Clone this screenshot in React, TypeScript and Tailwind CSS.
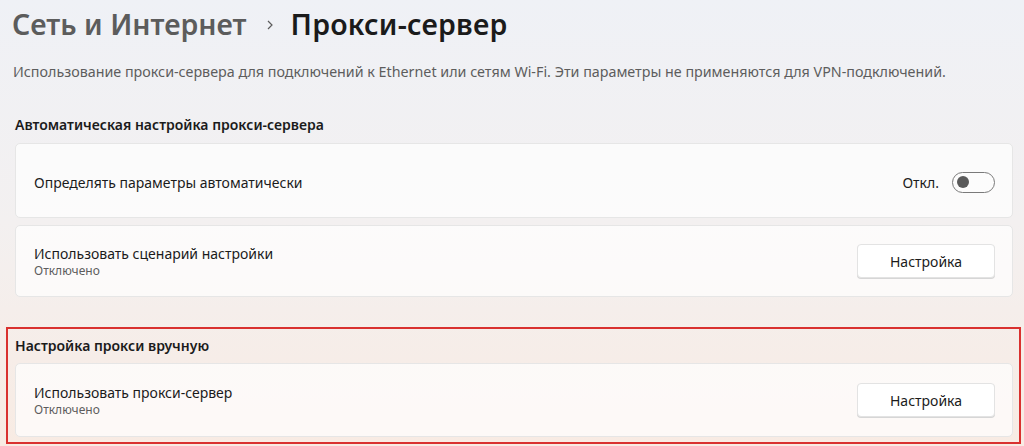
export default function App() {
  return (
    <div
      className="w-[1024px] h-[446px] overflow-hidden bg-gradient-to-b from-[#eff1f6] via-[#f3f0f0] to-[#f8ebe3] text-[#1b1b1b]"
      style={{ fontFamily: '"Noto Sans", "Open Sans", sans-serif' }}
    >
      {/* Breadcrumb title */}
      <div className="flex items-center h-[46px] pl-[12px] pt-[2px]">
        <span className="text-[28.5px] font-semibold text-[#5c5c5c]">Сеть и Интернет</span>
        <svg className="ml-[17px] mr-[15px] mt-[2px]" width="12" height="12" viewBox="0 0 12 12">
          <path d="M4 2 L8 6 L4 10" fill="none" stroke="#5c5c5c" strokeWidth="1.2" />
        </svg>
        <span className="text-[28.5px] font-semibold text-[#1b1b1b] tracking-[0.2px]">Прокси-сервер</span>
      </div>

      <p className="pl-[13px] mt-[15px] text-[14.3px] text-[#5d5d5d]">
        Использование прокси-сервера для подключений к Ethernet или сетям Wi-Fi. Эти параметры не применяются для VPN-подключений.
      </p>

      <h2 className="pl-[15px] mt-[33px] text-[14px] font-semibold leading-[20px]">
        Автоматическая настройка прокси-сервера
      </h2>

      <div className="ml-[15px] mr-[11px] mt-[8px] flex flex-col gap-[7px]">
        <div className="h-[75px] flex items-center justify-between pl-[18px] pr-[17px] pt-[3px] rounded-[5px] border border-[#e6e6e6] bg-white/70">
          <span className="text-[14px]">Определять параметры автоматически</span>
          <div className="flex items-center gap-[13px]">
            <span className="text-[14px]">Откл.</span>
            <div className="w-[43px] h-[21px] rounded-full border border-[#7a7a7a] bg-white/40 flex items-center pl-[4px]">
              <div className="w-[12px] h-[12px] rounded-full bg-[#5a5a5a]" />
            </div>
          </div>
        </div>

        <div className="h-[72px] flex items-center justify-between pl-[18px] pr-[17px] rounded-[5px] border border-[#e6e6e6] bg-white/70">
          <div className="flex flex-col">
            <span className="text-[14px] leading-[19px]">Использовать сценарий настройки</span>
            <span className="text-[12px] leading-[16px] text-[#5d5d5d]">Отключено</span>
          </div>
          <button className="w-[138px] h-[34px] rounded-[4px] border border-[#e3e3e3] bg-white text-[14px] shadow-[0_1px_0_#d6d6d6]">
            Настройка
          </button>
        </div>
      </div>

      <div className="ml-[6px] mr-[3px] mt-[30px] h-[117px] border-2 border-[#d9312f] pl-[7px] pr-[6px] pt-[7px]">
        <h2 className="text-[14px] font-semibold leading-[20px]">Настройка прокси вручную</h2>
        <div className="mt-[7px] h-[74px] flex items-center justify-between pl-[18px] pr-[17px] rounded-[5px] border border-[#e6e6e6] bg-white/70">
          <div className="flex flex-col">
            <span className="text-[14px] leading-[19px]">Использовать прокси-сервер</span>
            <span className="text-[12px] leading-[16px] text-[#5d5d5d]">Отключено</span>
          </div>
          <button className="w-[138px] h-[34px] rounded-[4px] border border-[#e3e3e3] bg-white text-[14px] shadow-[0_1px_0_#d6d6d6]">
            Настройка
          </button>
        </div>
      </div>
    </div>
  );
}
